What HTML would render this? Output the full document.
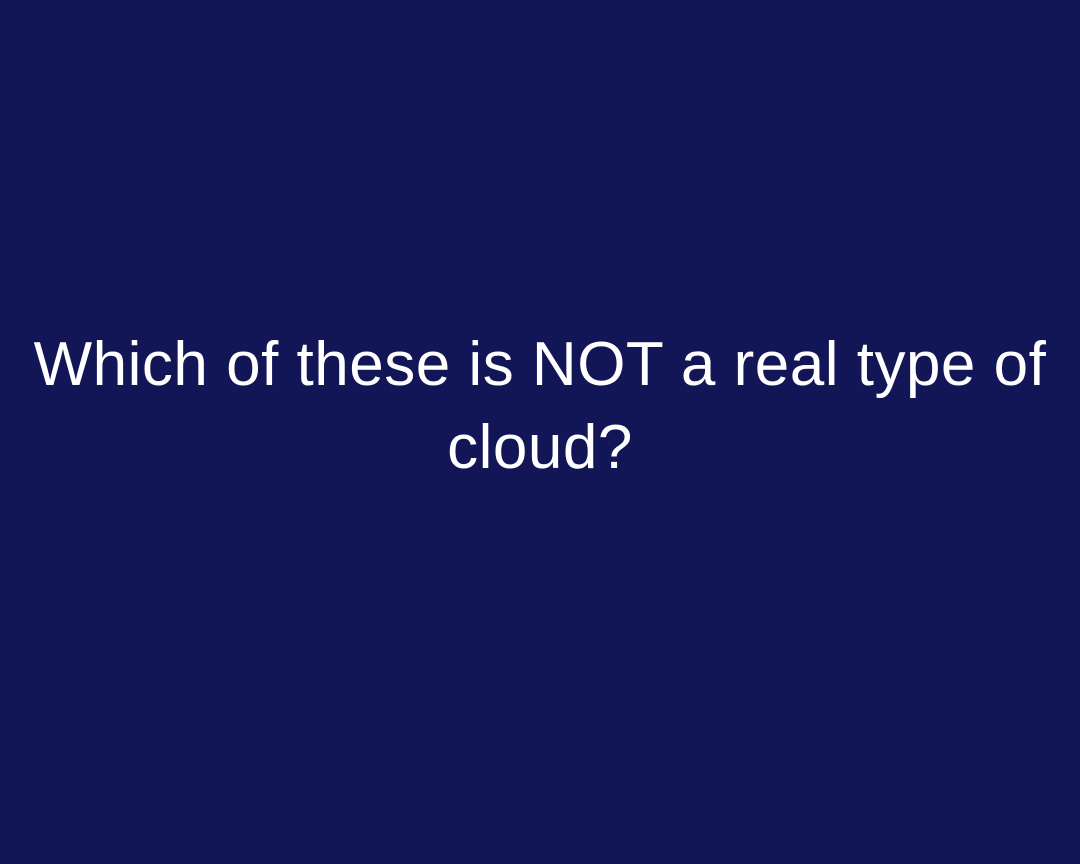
<!DOCTYPE html>
<html><head><meta charset="utf-8"><style>
html,body{margin:0;padding:0;width:1080px;height:864px;background:#131656;overflow:hidden}
.q{position:absolute;top:323px;left:0;width:1080px;text-align:center;color:#fff;font-family:"Liberation Sans","DejaVu Sans",sans-serif;font-size:62px;line-height:83px;letter-spacing:0.5px;white-space:nowrap}
</style></head><body>
<div class="q">Which of these is NOT a real type of<br>cloud?</div>
</body></html>
